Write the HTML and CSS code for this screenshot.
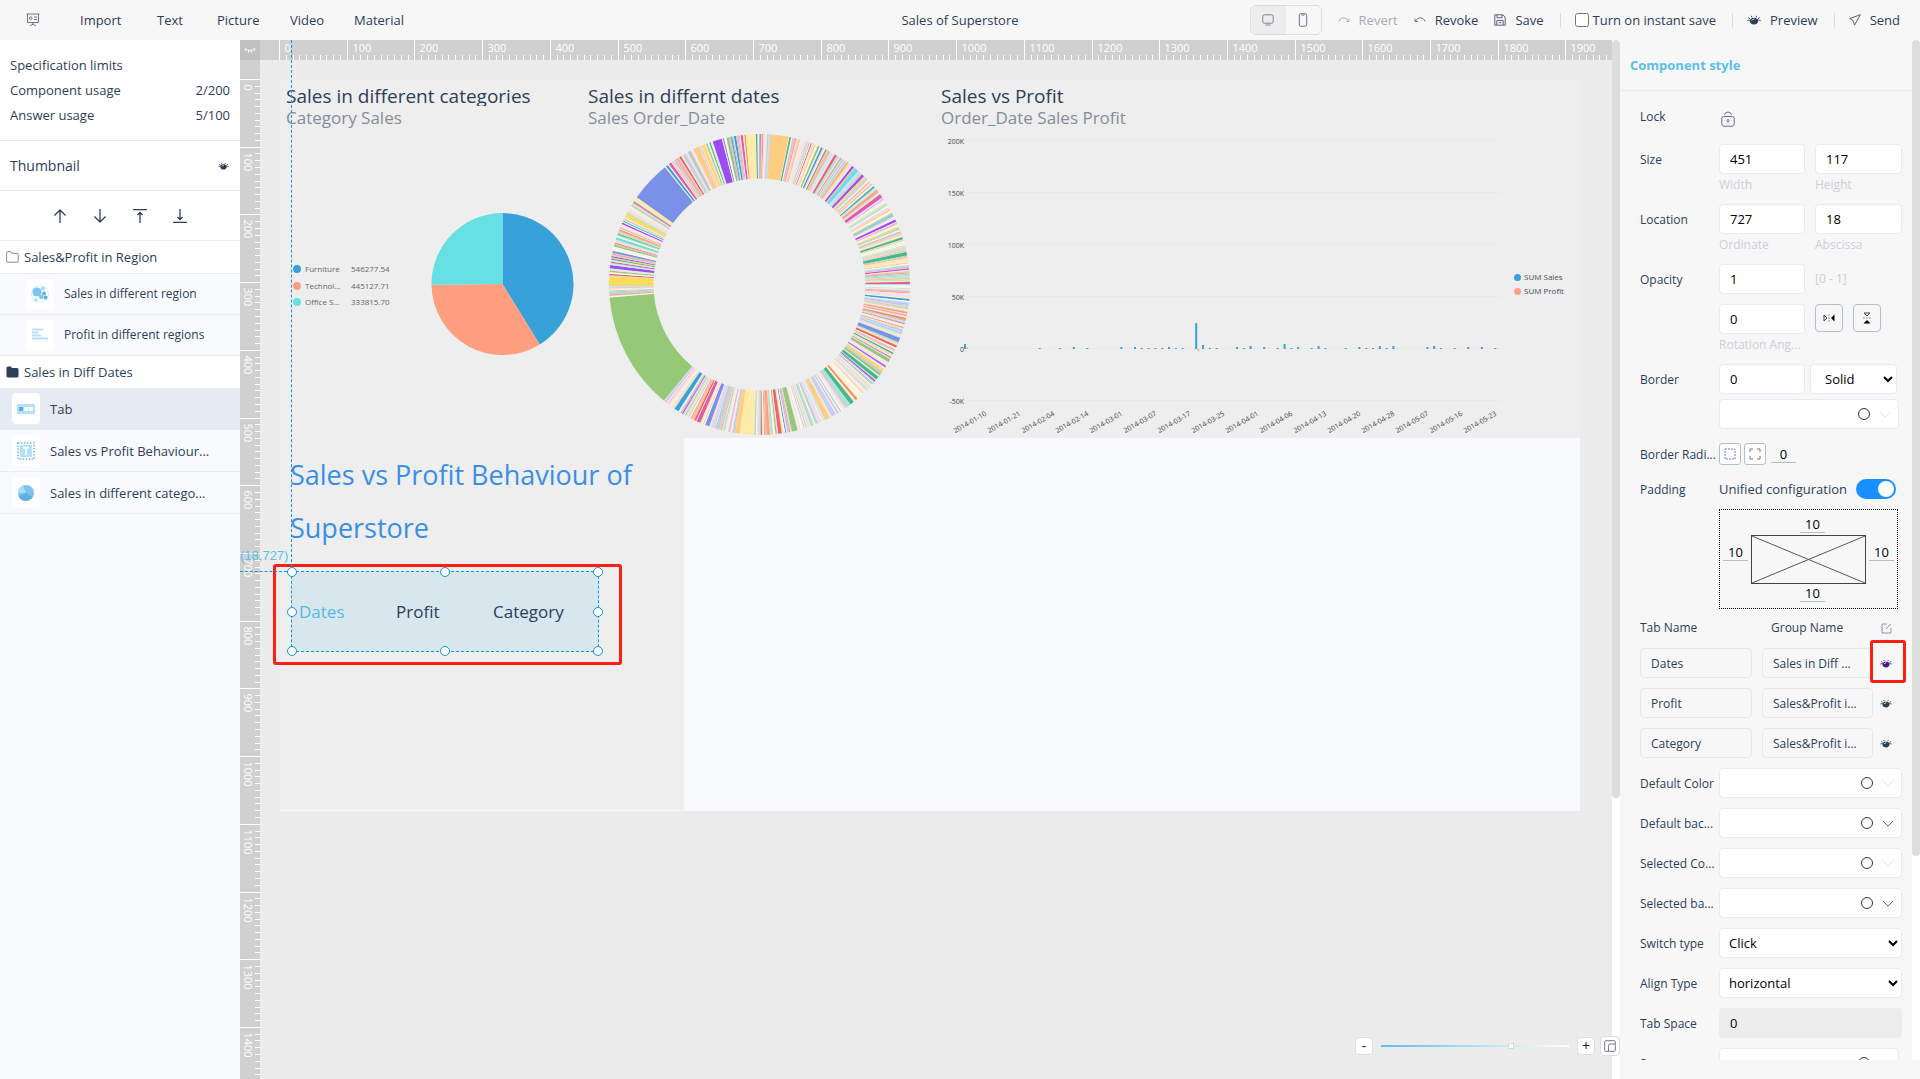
FILE: index.html
```html
<!DOCTYPE html>
<html lang="en">
<head>
<meta charset="utf-8">
<title>Sales of Superstore</title>
<link rel="stylesheet" href="styles.css">
</head>
<body>
<svg class="defs" aria-hidden="true">
  <symbol id="eye" viewBox="0 0 14 10">
    <path d="M2.600 5C3.600 3.500 5 2.900 7 2.900s3.400.6 4.400 2.100C11.200 8 9.500 9.600 7 9.600S2.800 8 2.600 5Z" fill="currentColor"/>
    <path d="M.3 5.600 2.600 5M13.700 5.600 11.400 5M1.200 2.500 3 3.800M12.800 2.500 11 3.800M4.300.8 5 2.500M9.700.8 9 2.500" stroke="currentColor" stroke-width=".9" fill="none"/>
    <path d="M4.800 5.400C5.400 4.500 6.200 4.200 7.400 4.200" stroke="#f7f7f7" stroke-width="1" fill="none"/>
  </symbol>
  <symbol id="chevron" viewBox="0 0 14 8"><path d="M1 1 7 7 13 1" fill="none" stroke="currentColor" stroke-width="1.100"/></symbol>
</svg>

<header class="topbar">
  <nav class="menu">
    <button class="plain menu-home" aria-label="Slides">
      <svg width="14" height="14" viewBox="0 0 14 14" fill="none" stroke="#6d7390"><path d="M.5 1H13.500M1.500 1V9.500H12.500V1M7 9.500V12M4 13 7 11 10 13"/><circle cx="4.700" cy="5.200" r="1.300"/><path d="M8 4H11M8 6.500H11"/></svg>
    </button>
    <button class="plain">Import</button>
    <button class="plain">Text</button>
    <button class="plain">Picture</button>
    <button class="plain">Video</button>
    <button class="plain">Material</button>
  </nav>
  <h1 class="doc-title">Sales of Superstore</h1>
  <div class="actions">
    <div class="device">
      <button class="plain on" aria-label="Desktop"><svg width="12" height="12" viewBox="0 0 12 12" fill="none" stroke="#8b7f98"><rect x=".8" y=".8" width="10.400" height="8.400" rx="1.500"/><path d="M3.500 11H8.500"/></svg></button>
      <button class="plain" aria-label="Phone"><svg width="10" height="14" viewBox="0 0 10 14" fill="none" stroke="#6b7399"><rect x="1.300" y=".7" width="7.400" height="12.600" rx="1.500"/><path d="M3.500 2H6.500"/></svg></button>
    </div>
    <button class="plain act faded"><svg width="12" height="10" viewBox="0 0 12 10" fill="none" stroke="currentColor"><path d="M1 6.500C2 2 8 1.500 10.500 6M11 3.500V6.500H8"/></svg>Revert</button>
    <button class="plain act"><svg width="12" height="10" viewBox="0 0 12 10" fill="none" stroke="#7a6f86"><path d="M11 6.500C10 2 4 1.500 1.500 6M1 3.500V6.500H4"/></svg>Revoke</button>
    <button class="plain act"><svg width="12" height="12" viewBox="0 0 12 12" fill="none" stroke="#59627c"><path d="M.8.8H8.800L11.200 3V11.200H.8ZM3 .8V3.800H8V.8M2.800 11V6.500H9.200V11M4.500 8.700H7.500"/></svg>Save</button>
    <label class="instant"><input type="checkbox">Turn on instant save</label>
    <button class="plain act sep"><svg width="14" height="10"><use href="#eye"/></svg>Preview</button>
    <button class="plain act sep"><svg width="12" height="12" viewBox="0 0 12 12" fill="none" stroke="#59627c"><path d="M11.300.7.800 4.600 4 6.600 5.500 11.200Z"/></svg>Send</button>
  </div>
</header>

<main class="workspace">
  <aside class="layers">
    <dl class="limits">
      <div><dt>Specification limits</dt></div>
      <div><dt>Component usage</dt><dd>2/200</dd></div>
      <div><dt>Answer usage</dt><dd>5/100</dd></div>
    </dl>
    <div class="thumb-head"><h2>Thumbnail</h2><button class="plain" aria-label="Toggle thumbnails"><svg width="11" height="8"><use href="#eye"/></svg></button></div>
    <div class="order">
      <button class="plain" aria-label="Move up"><svg width="14" height="14" viewBox="0 0 14 14"><path d="M7 14V1M1.500 6.500 7 1 12.500 6.500"/></svg></button>
      <button class="plain" aria-label="Move down"><svg width="14" height="14" viewBox="0 0 14 14"><path d="M7 0V13M1.500 7.500 7 13 12.500 7.500"/></svg></button>
      <button class="plain" aria-label="Move to top"><svg width="14" height="14" viewBox="0 0 14 14"><path d="M0 .7H14M7 14V3.500M4.500 6 7 3.500 9.500 6"/></svg></button>
      <button class="plain" aria-label="Move to bottom"><svg width="14" height="14" viewBox="0 0 14 14"><path d="M0 13.300H14M7 0V10.500M4.500 8 7 10.500 9.500 8"/></svg></button>
    </div>
    <ul class="tree">
      <li class="group"><svg width="13" height="12" viewBox="0 0 13 12" fill="none" stroke="#8b8794"><path d="M.6 2.400V10Q.6 11.200 1.800 11.200H11Q12.200 11.200 12.200 10V3.500Q12.200 2.300 11 2.300H6L5 .7H1.800Q.6.7.6 2Z"/></svg>Sales&amp;Profit in Region</li>
      <li class="item nested"><span class="chip"><svg width="18" height="18" viewBox="0 0 18 18"><circle cx="9" cy="9" r="8.500" fill="none" stroke="#d8eefb"/><circle cx="6" cy="7" r="4.600" fill="#7fc4ee"/><circle cx="12" cy="3.500" r="2" fill="#9fdcfa"/><circle cx="13" cy="8.500" r="2" fill="#5fb0e2"/><circle cx="10.200" cy="12" r="2.200" fill="#7fc4ee"/><circle cx="14.500" cy="12.500" r="2" fill="#5fb0e2"/><circle cx="5" cy="15" r="2" fill="#b8e6fc"/></svg></span>Sales in different region</li>
      <li class="item nested"><span class="chip"><svg width="18" height="14" viewBox="0 0 18 14"><path d="M1 1.500H12M1 4.500H7M1 7.500H10M1 10.500H17" stroke="#b5e2fa" stroke-width="1.800"/><path d="M1 13H17" stroke="#dff2fc" stroke-dasharray="1 2"/></svg></span>Profit in different regions</li>
      <li class="group"><svg width="13" height="12" viewBox="0 0 13 12" fill="#2d3e58"><path d="M.5 2Q.5.5 2 .5H5L6 2H11Q12.500 2 12.500 3.500V10Q12.500 11.500 11 11.500H2Q.5 11.500.5 10Z"/></svg>Sales in Diff Dates</li>
      <li class="item on"><span class="chip"><svg width="18" height="10" viewBox="0 0 18 10"><rect width="18" height="10" rx="1" fill="#b3e1fb"/><rect x="2" y="3" width="4" height="4" fill="#5aabe0"/><rect x="7" y="3" width="4" height="4" fill="#fff"/><rect x="12" y="3" width="4" height="4" fill="#fff"/></svg></span>Tab</li>
      <li class="item"><span class="chip"><svg width="18" height="18" viewBox="0 0 18 18"><rect x="1" y="1" width="16" height="16" fill="none" stroke="#6fb9e6" stroke-width="1.500" stroke-dasharray="1.500 1.500"/><rect x="3" y="3" width="12" height="12" rx="1" fill="#b3e1fb"/><path d="M6 5.700H12M9 5.700V13" stroke="#fff" stroke-width="1.800"/></svg></span>Sales vs Profit Behaviour...</li>
      <li class="item"><span class="chip"><svg width="18" height="18" viewBox="0 0 18 18"><circle cx="9" cy="9" r="8" fill="#7cc3ee"/><path d="M9 9 1 9A8 8 0 0 1 6 1.500Z" fill="#a9defa"/><path d="M9 9 1.500 12.500Q4 17 9 17L16 13.500Z" fill="#5fb0e2"/></svg></span>Sales in different catego...</li>
    </ul>
  </aside>

  <section class="stage">
    <button class="plain corner" aria-label="Hide guides"><svg width="12" height="6" viewBox="0 0 12 6" fill="none" stroke="#fff"><path d="M.5 1Q6 6 11.500 1M2 2.500 1 4M4.500 3.500V5.500M7.500 3.500V5.500M10 2.500 11 4"/></svg></button>
    <svg class="ruler ruler-x" id="ruler-x"></svg>
    <svg class="ruler ruler-y" id="ruler-y"></svg>
    <div class="viewport">
      <div class="canvas">
        <article class="widget w-pie">
          <h3>Sales in different categories</h3>
          <p>Category Sales</p>
          <svg class="plot" viewBox="0 0 301 304">
            <g id="pie"></g>
            <g class="legend">
              <circle cx="17" cy="135" r="4" fill="#37a2da"/><text x="25" y="138">Furniture</text><text x="71" y="138">546277.54</text>
              <circle cx="17" cy="152" r="4" fill="#ff9f7f"/><text x="25" y="155">Technol...</text><text x="71" y="155">445127.71</text>
              <circle cx="17" cy="168" r="4" fill="#67e0e3"/><text x="25" y="171">Office S...</text><text x="71" y="171">333815.70</text>
            </g>
          </svg>
        </article>
        <article class="widget w-donut">
          <h3>Sales in differnt dates</h3>
          <p>Sales Order_Date</p>
          <svg class="plot" viewBox="0 0 350 304"><g id="donut"></g></svg>
        </article>
        <article class="widget w-bars">
          <h3>Sales vs Profit</h3>
          <p>Order_Date Sales Profit</p>
          <svg class="plot" viewBox="0 0 649 304"><g id="bars"></g></svg>
        </article>
        <div class="widget w-text">Sales vs Profit Behaviour of Superstore</div>
        <div class="mark mark-tab"></div>
        <div class="guide-x"></div>
        <div class="guide-y"></div>
        <span class="coords">(18,727)</span>
        <div class="w-tab">
          <button class="plain on">Dates</button><button class="plain">Profit</button><button class="plain">Category</button>
          <i class="h tl"></i><i class="h tc"></i><i class="h tr"></i><i class="h ml"></i><i class="h mr"></i><i class="h bl"></i><i class="h bc"></i><i class="h br"></i>
        </div>
      </div>
    </div>
    <div class="zoom">
      <button aria-label="Zoom out">-</button>
      <input type="range" min="0" max="100" value="70" aria-label="Zoom">
      <button aria-label="Zoom in">+</button>
      <button class="fit" aria-label="Fit"><svg width="12" height="12" viewBox="0 0 12 12" fill="none" stroke="#7d7788"><rect x=".7" y=".7" width="10.600" height="10.600" rx="1"/><path d="M4.500 11V5.500Q4.500 4 6 4H11"/></svg></button>
    </div>
  </section>
  <div class="scroll"><div class="bar stage-bar"></div></div>

  <aside class="props">
    <h2>Component style</h2>
    <div class="props-body">
      <form class="form">
        <span class="lbl raised">Lock</span>
        <div class="ctl row30"><button type="button" class="plain" aria-label="Lock"><svg width="14" height="16" viewBox="0 0 14 16" fill="none" stroke="#6b6f88"><rect x=".8" y="5.500" width="12.400" height="9.700" rx="2"/><path d="M3.500 4Q4 1 7 1T10.500 4"/><circle cx="7" cy="9.500" r="1"/><path d="M7 10.500V12"/></svg></button></div>

        <span class="lbl">Size</span>
        <div class="ctl pair">
          <input id="w" value="451"><input id="h" value="117">
          <label for="w">Width</label><label for="h">Height</label>
        </div>

        <span class="lbl">Location</span>
        <div class="ctl pair">
          <input id="o" value="727"><input id="a" value="18">
          <label for="o">Ordinate</label><label for="a">Abscissa</label>
        </div>

        <label class="lbl" for="op">Opacity</label>
        <div class="ctl pair"><input id="op" value="1"><span class="hint">[0 - 1]</span></div>

        <span class="lbl"></span>
        <div class="ctl pair">
          <input id="rot" value="0">
          <div class="flips">
            <button type="button" aria-label="Flip horizontally"><svg width="12" height="8" viewBox="0 0 12 8"><path d="M1 1 4 4 1 7Z" fill="none" stroke="#444"/><path d="M6 0V8" stroke="#999" stroke-dasharray="2 1"/><path d="M11.500.500V7.500L8 4Z"/></svg></button>
            <button type="button" aria-label="Flip vertically"><svg width="8" height="12" viewBox="0 0 8 12"><path d="M1 1 4 4 7 1Z" fill="none" stroke="#444"/><path d="M0 6H8" stroke="#999" stroke-dasharray="2 1"/><path d="M.500 11.500H7.500L4 8Z"/></svg></button>
          </div>
          <label for="rot">Rotation Ang...</label>
        </div>

        <label class="lbl" for="bd">Border</label>
        <div class="ctl border-ctl">
          <input id="bd" value="0"><select aria-label="Border style"><option>Solid</option></select>
          <button type="button" class="color dim" aria-label="Border color"><i></i><svg width="12" height="7"><use href="#chevron"/></svg></button>
        </div>

        <label class="lbl" for="rad">Border Radi...</label>
        <div class="ctl radius">
          <button type="button" aria-label="All corners"><svg width="12" height="12" viewBox="0 0 12 12"><rect x="1" y="1" width="10" height="10" fill="none" stroke="#6b7be0" stroke-dasharray="2 1"/></svg></button>
          <button type="button" aria-label="Each corner"><svg width="12" height="12" viewBox="0 0 12 12"><path d="M1 4V1H4M8 1H11V4M11 8V11H8M4 11H1V8" fill="none" stroke="#777"/></svg></button>
          <input id="rad" class="line" value="0">
        </div>

        <span class="lbl short">Padding</span>
        <div class="ctl padding">
          <label class="unified">Unified configuration<input type="checkbox" role="switch" checked></label>
          <div class="box">
            <input class="line t" value="10" aria-label="Padding top">
            <input class="line l" value="10" aria-label="Padding left">
            <svg class="cross" viewBox="0 0 114 48" preserveAspectRatio="none"><path d="M0 0 114 48M0 48 114 0" stroke="#555" fill="none"/></svg>
            <input class="line r" value="10" aria-label="Padding right">
            <input class="line b" value="10" aria-label="Padding bottom">
          </div>
        </div>
      </form>

      <div class="tabs">
        <span>Tab Name</span><span class="gn">Group Name</span><button class="plain" aria-label="Edit groups"><svg width="11" height="11" viewBox="0 0 11 11" fill="none" stroke="#9a94a6"><path d="M6 1H1V10H10V5M5 6 10 1"/></svg></button>
        <input value="Dates" aria-label="Tab 1 name"><input value="Sales in Diff ..." aria-label="Tab 1 group"><button class="plain marked" aria-label="Show tab 1"><svg width="12" height="9"><use href="#eye"/></svg></button>
        <input value="Profit" aria-label="Tab 2 name"><input value="Sales&amp;Profit i..." aria-label="Tab 2 group"><button class="plain" aria-label="Show tab 2"><svg width="12" height="9"><use href="#eye"/></svg></button>
        <input value="Category" aria-label="Tab 3 name"><input value="Sales&amp;Profit i..." aria-label="Tab 3 group"><button class="plain" aria-label="Show tab 3"><svg width="12" height="9"><use href="#eye"/></svg></button>
      </div>

      <form class="form tail">
        <span class="lbl">Default Color</span>
        <button type="button" class="color dim" aria-label="Default color"><i></i><svg width="12" height="7"><use href="#chevron"/></svg></button>
        <span class="lbl">Default bac...</span>
        <button type="button" class="color" aria-label="Default background"><i></i><svg width="12" height="7"><use href="#chevron"/></svg></button>
        <span class="lbl">Selected Co...</span>
        <button type="button" class="color dim" aria-label="Selected color"><i></i><svg width="12" height="7"><use href="#chevron"/></svg></button>
        <span class="lbl">Selected ba...</span>
        <button type="button" class="color" aria-label="Selected background"><i></i><svg width="12" height="7"><use href="#chevron"/></svg></button>
        <label class="lbl" for="sw">Switch type</label>
        <select id="sw"><option>Click</option></select>
        <label class="lbl" for="al">Align Type</label>
        <select id="al"><option>horizontal</option></select>
        <label class="lbl" for="ts">Tab Space</label>
        <input id="ts" class="off" value="0" readonly>
        <span class="lbl">Space</span>
        <button type="button" class="color dim narrow" aria-label="Space color"><i></i><svg width="12" height="7"><use href="#chevron"/></svg></button>
      </form>
    </div>
  </aside>
  <div class="scroll props-scroll"><div class="bar props-bar"></div></div>
</main>
<script src="app.js"></script>
</body>
</html>
```
FILE: styles.css
```css
*, *::before, *::after { box-sizing: border-box; }
body {
  margin: 0;
  height: 100vh;
  display: flex;
  flex-direction: column;
  font: 14px/20px "Open Sans", "Noto Sans", sans-serif;
  color: #2d3e58;
  background: #f7f7f7;
  overflow: hidden;
}
button, input, select { font: inherit; color: inherit; margin: 0; }
h1, h2, h3, p, dl, dd, ul { margin: 0; padding: 0; font: inherit; }
svg { display: block; flex: none; }
.defs { position: absolute; width: 0; height: 0; }
.plain { border: 0; background: none; padding: 0; display: flex; align-items: center; }

/* top bar */
.topbar { flex: none; height: 40px; display: grid; grid-template-columns: 1fr auto 1fr; align-items: center; font-size: 13px; }
.menu { display: grid; grid-template-columns: 54px 77px 60px 73px 64px auto; justify-content: start; padding-left: 26px; }
.actions { display: flex; align-items: center; justify-content: flex-end; gap: 16px; padding-right: 20px; white-space: nowrap; }
.device { display: flex; width: 72px; height: 30px; border: 1px solid #dedede; border-radius: 6px; overflow: hidden; }
.device button { flex: 1; justify-content: center; }
.device .on { background: #ededed; }
.act { gap: 9px; }
.faded { color: #a5abb5; }
.instant { display: flex; align-items: center; gap: 4px; }
.instant input { width: 14px; height: 14px; }
.instant, .sep { position: relative; padding-left: 15px; }
.instant::before, .sep::before { content: ""; position: absolute; left: 0; top: 3px; height: 15px; border-left: 1px solid #ddd; }

.workspace { flex: 1; min-height: 0; display: flex; }

/* layer list */
.layers { flex: none; width: 240px; background: #f9fafd; }
.limits { background: #fff; padding: 13px 10px 12px; height: 101px; border-bottom: 1px solid #ebebeb; font-size: 13px; line-height: 25px; }
.limits div { display: flex; justify-content: space-between; }
.thumb-head { display: flex; justify-content: space-between; align-items: center; height: 50px; padding: 0 11px 0 10px; background: #fff; border-bottom: 1px solid #ebebeb; }
.order { display: flex; justify-content: center; gap: 26px; height: 50px; background: #fff; border-bottom: 1px solid #ebebeb; }
.order path { fill: none; stroke: #2d3e58; stroke-width: 1.3; }
.tree { list-style: none; font-size: 13px; }
.group { display: flex; align-items: center; gap: 5px; height: 32px; padding-left: 6px; background: #fff; }
.item { display: flex; align-items: center; gap: 10px; height: 42px; padding-left: 12px; border-bottom: 1px solid #ebedf0; }
.item.on { background: #e6eaf2; }
.nested { height: 41px; padding-left: 26px; font-size: 12px; border-top: 1px solid #ebedf0; border-bottom: 0; }
.nested + .group { border-top: 1px solid #ebedf0; height: 33px; }
.chip { display: flex; align-items: center; justify-content: center; width: 28px; height: 31px; border-radius: 4px; background: #fff; }

/* stage */
.stage { flex: 1; min-width: 0; position: relative; display: grid; grid-template: 20px 1fr / 20px 1fr; background: #ececec; }
.corner { background: #c0c0c0; justify-content: center; }
.ruler { width: 100%; height: 100%; background: #d0d0d0; overflow: hidden; }
.ruler line { stroke: #fff; stroke-width: 1; }
.ruler text { fill: #fff; font-size: 11px; }
.viewport { min-width: 0; min-height: 0; padding: 20px; }
.canvas { position: relative; width: 1300px; height: 731px; background: #f9fafd; }
.widget { position: absolute; background: #eee; }
.w-pie { left: 0; top: 0; width: 301px; height: 358px; padding: 4px 6px; }
.w-donut { left: 301px; top: 0; width: 350px; height: 358px; padding: 4px 7px; }
.w-bars { left: 651px; top: 0; width: 649px; height: 358px; padding: 4px 10px; }
.widget h3 { font-size: 19px; line-height: 24px; height: 22px; overflow: hidden; white-space: nowrap; }
.widget p { font-size: 17px; line-height: 24px; color: #858d9a; }
.plot { position: absolute; left: 0; top: 54px; width: 100%; height: 304px; }
.legend text { font-size: 8px; fill: #666; }
.axis .key { font-size: 8px; fill: #4a4f5c; }
.axis .tick { font-size: 7px; fill: #444; }
.w-text { left: 0; top: 358px; width: 404px; height: 372px; padding: 10px; font-size: 27px; line-height: 53px; color: #3a8ee6; }
.mark { position: absolute; border: 3px solid #ff1e12; border-radius: 3px; }
.mark-tab { left: -7px; top: 484px; width: 349px; height: 101px; }
.guide-x { position: absolute; left: 11px; top: -40px; height: 532px; border-left: 1px dashed #1296db; }
.guide-y { position: absolute; left: -40px; top: 491px; width: 52px; border-top: 1px dashed #1296db; }
.coords { position: absolute; left: -40px; top: 466px; font-family: "Liberation Sans", Arial, sans-serif; font-size: 13px; color: #5bbfe8; }
.w-tab { position: absolute; left: 11px; top: 491px; width: 308px; height: 81px; display: grid; grid-template-columns: repeat(3, 97px); padding-left: 7px; border: 1px dashed #1296db; background: #d8e6ed; font-size: 17px; }
.w-tab .on { color: #55b9e8; }
.h { position: absolute; width: 10px; height: 10px; margin: -5px; border: 1px solid #1296db; border-radius: 50%; background: #fff; }
.tl, .tc, .tr { top: 0; }
.ml, .mr { top: 50%; }
.bl, .bc, .br { top: 100%; }
.tl, .ml, .bl { left: 0; }
.tc, .bc { left: 50%; }
.tr, .mr, .br { left: 100%; }

.zoom { position: absolute; right: -8px; bottom: 23px; display: flex; align-items: center; z-index: 1; }
.zoom button { width: 18px; height: 18px; padding: 0; border: 1px solid #ddd; border-radius: 4px; background: #fff; color: #222; line-height: 14px; display: flex; align-items: center; justify-content: center; }
.zoom .fit { width: 20px; height: 20px; margin-left: 5px; }
.zoom input { appearance: none; width: 188px; height: 2px; margin: 0 8px; background: linear-gradient(90deg, #5bbfe8, #fff); }
.zoom input::-webkit-slider-thumb { appearance: none; width: 6px; height: 6px; border: 1px solid #d5d5d5; border-radius: 1px; background: #fff; }

.scroll { flex: none; width: 8px; background: #fff; }
.bar { background: #ddd; border-radius: 4px; }
.stage-bar { height: 73%; }
.props-scroll { margin-bottom: 19px; }
.props-bar { height: 80%; }

/* properties */
.props { flex: none; width: 292px; display: flex; flex-direction: column; padding-bottom: 19px; font-size: 13px; }
.props h2 { height: 51px; line-height: 50px; padding-left: 10px; font-weight: 700; color: #5bbfe8; border-bottom: 1px solid #ebebeb; }
.props-body { flex: 1; min-height: 0; overflow: hidden; padding: 13px 10px 0 20px; }
.props input:not([type]), .props select, .color { width: 100%; min-width: 0; height: 30px; padding: 0 10px; border: 1px solid #e8ebef; border-radius: 4px; background: #fff; color: #000; }
.props select { padding: 0 0 0 5px; }
.form { display: grid; grid-template-columns: 79px 183px; row-gap: 10px; }
.lbl { height: 30px; line-height: 32px; white-space: nowrap; font-size: 12px; }
.raised { line-height: 26px; }
.short { line-height: 22px; }
.row30 { display: flex; align-items: center; height: 30px; padding-left: 2px; }
.pair { display: grid; grid-template-columns: 86px 87px; column-gap: 10px; }
.pair label { height: 20px; line-height: 22px; }
.pair label, .hint { color: #ccd0d8; white-space: nowrap; font-size: 12px; }
.hint { line-height: 30px; }
.flips { display: flex; gap: 10px; }
.flips button { width: 28px; height: 28px; padding: 0; border: 1px solid #afbfd0; border-radius: 4px; background: none; display: flex; align-items: center; justify-content: center; }
.border-ctl { display: grid; grid-template-columns: 86px 87px; gap: 5px; }
.border-ctl .color { grid-column: span 2; width: 180px; }
.props .border-ctl select { padding-left: 10px; }
.color { display: flex; align-items: center; justify-content: flex-end; gap: 9px; }
.props .color { padding: 0 7px; }
.color i { width: 12px; height: 12px; border: 1px solid #333; border-radius: 50%; }
.color svg { color: #555b6e; }
.color.dim svg { color: #ddd; }
.props .narrow { width: 180px; }
.radius { display: flex; align-items: center; gap: 3px; }
.radius button { width: 22px; height: 22px; padding: 0; border: 1px solid #afbfd0; border-radius: 3px; background: #fff; display: flex; align-items: center; justify-content: center; }
.props input.line:not([type]) { width: 25px; height: 18px; padding: 0; border: 0; border-bottom: 1px solid #afbfd0; border-radius: 0; background: none; text-align: center; }
.radius input { margin-left: 2px; }
.padding { display: grid; gap: 10px; }
.unified { display: flex; justify-content: space-between; align-items: center; height: 20px; padding-right: 6px; }
.unified input { appearance: none; width: 40px; height: 20px; border-radius: 10px; background: #1890ff; display: flex; justify-content: flex-end; padding: 2px; }
.unified input::after { content: ""; width: 16px; height: 16px; border-radius: 50%; background: #fff; }
.box { width: 179px; height: 100px; border: 1px dotted #000; display: grid; grid-template: 25px 49px 24px / 31px 115px 31px; justify-items: center; align-items: start; }
.box .t, .box .b { grid-column: 1 / 4; margin-left: 8px; }
.box .t { align-self: end; margin-bottom: 2px; }
.box .l, .box .r { margin-top: 8px; }
.cross { width: 115px; height: 49px; border: 1px solid #444; }
.tabs { display: grid; grid-template-columns: 112px 111px 14px; column-gap: 10px; row-gap: 10px; align-items: center; margin: 9px 0 10px; font-size: 12px; }
.tabs .gn { padding-left: 9px; }
.tabs .plain { justify-content: center; margin-left: -8px; position: relative; }
.props .tabs input { background: none; border-color: #e6e8ec; color: #2d3e58; }
.marked { color: #4b1a8a; }
.marked::after { content: ""; position: absolute; left: -5px; top: -19px; width: 36px; height: 43px; border: 3px solid #ff1e12; border-radius: 3px; }
.props input.off:not([type]) { background: #ededed; border-color: #ededed; }
```
FILE: app.js
```js
const NS = 'http://www.w3.org/2000/svg';
function add(parent, tag, attrs, text) {
  const el = document.createElementNS(NS, tag);
  for (const k in attrs) el.setAttribute(k, attrs[k]);
  if (text !== undefined) el.textContent = text;
  parent.appendChild(el);
  return el;
}

/* rulers: a canvas of 1920 units is drawn 1300px wide */
const scale = 1300 / 1920;
const rx = document.getElementById('ruler-x');
const ry = document.getElementById('ruler-y');
function ruler(svg, length, vertical) {
  for (let u = 0; 20 + u * scale < length; u += 10) {
    const p = 20 + Math.round(u * scale) - 0.5;
    const major = u % 100 === 0;
    const from = major ? 0 : 15;
    add(svg, 'line', vertical ? { y1: p, y2: p, x1: from, x2: 20 } : { x1: p, x2: p, y1: from, y2: 20 });
    if (major) {
      add(svg, 'text', vertical ? { transform: `translate(4 ${p + 5}) rotate(90)` } : { x: p + 5, y: 12 }, u);
    }
  }
}
ruler(rx, rx.clientWidth || 1352, false);
ruler(ry, ry.clientHeight || 1019, true);

/* ring slices, angles in degrees clockwise from the top */
function slice(g, cx, cy, r0, r1, a, b, fill) {
  const pt = (r, d) => {
    const t = d * Math.PI / 180;
    return (cx + r * Math.sin(t)).toFixed(2) + ' ' + (cy - r * Math.cos(t)).toFixed(2);
  };
  const big = b - a > 180 ? 1 : 0;
  const inner = r0 ? `L${pt(r0, b)}A${r0} ${r0} 0 ${big} 0 ${pt(r0, a)}` : `L${cx} ${cy}`;
  add(g, 'path', { d: `M${pt(r1, a)}A${r1} ${r1} 0 ${big} 1 ${pt(r1, b)}${inner}Z`, fill });
}

const pie = document.getElementById('pie');
slice(pie, 222.5, 150, 0, 71, 0, 148.4, '#37a2da');
slice(pie, 222.5, 150, 0, 71, 148.4, 269.3, '#ff9f7f');
slice(pie, 222.5, 150, 0, 71, 269.3, 360, '#67e0e3');

const C = {
  b: '#37a2da', g: '#96c977', d: '#47b784', p: '#9d4bf5', k: '#e15bad', y: '#ffdb5c', l: '#ffeaa8',
  o: '#fdcd83', s: '#ff9f7f', r: '#eb6467', c: '#67e0e3', v: '#7991e8', a: '#ff8f3a'
};
const faint = ['#fff3d9', '#ffeaa8', '#f5d3dc', '#fff8ee', '#c9dff5', '#ffe3d6', '#f3e6ff', '#d4ede0', '#fff3d9',
  '#ffb89c', '#fbd9e8', '#b5c3f3', '#a9dcc5', '#f7a8a2', '#fff6e0', '#d5b9f7', '#9be8ea', '#fdcd83', '#cfe5b8'];
const slices = [
  [0, .5, 'p'], [.9, 1.5, 's'], [4.4, 11.2, 'o'], [11.5, 12.2, 'd'], [15, 15.8, 'o'], [20, 20.400, 'k'], [22.8, 23.6, 'g'], [24.2, 24.9, 'b'], [26, 26.5, 'r'],
  [30, 31, 'r'], [32.5, 33.1, 's'], [33.6, 34, 'c'], [35.6, 36, 'a'], [38, 38.9, 'p'], [39.5, 41, 'c'], [43, 44, 'p'], [49.3, 49.9, 'b'],
  [51, 51.9, 's'], [53.2, 54.7, 'k'], [62, 62.9, 'c'], [64.4, 65.400, 'p'], [71.7, 72.5, 'd'], [77.5, 78.9, 'd'], [83.8, 84.4, 'k'],
  [89, 89.8, 'k'], [95.5, 96.3, 'b'], [98.8, 99.1, 'c'], [100.5, 101.2, 's'], [102.9, 103.6, 'a'], [105, 105.3, 'd'], [110.8, 112.6, 'v'], [114, 114.9, 'r'],
  [117, 117.6, 'd'], [118.9, 119.3, 'k'], [119.8, 121.1, 'g'], [122.8, 123.400, 'p'], [124.2, 125.3, 'y'], [126.2, 127.2, 'g'], [127.8, 129.2, 'd'],
  [129.6, 130.1, 'p'], [131, 131.4, 'c'], [139.4, 140.3, 'a'], [141.2, 142.8, 'd'], [152.2, 154.2, 'o'], [165.400, 167.6, 'g'], [169.8, 170.2, 'b'], [171.5, 172.9, 'r'],
  [173.4, 173.9, 'g'], [176, 177.2, 's'], [179, 179.4, 'r'], [182.3, 187.6, 'l'], [187.6, 189.2, 'o'], [199.5, 201.2, 'v'], [203.2, 204.7, 'k'], [205, 205.7, 'r'],
  [210.6, 211, 'p'], [212.6, 214.4, 'b'], [219.6, 265, 'g'], [269.6, 273.2, 'y'], [273.5, 274.1, 'r'], [274.8, 275.3, 'g'],
  [276.2, 277.4, 'p'], [278.3, 278.8, 'k'], [279.5, 279.9, 'd'], [280.4, 280.9, 'p'], [282.2, 283, 'v'], [284.6, 285.2, 'g'], [285.7, 286.2, 'a'],
  [287.3, 288.3, 'c'], [289.5, 289.9, 'd'], [290.8, 291.6, 's'], [293.7, 294.3, 'p'], [294.8, 295.2, 'b'], [296.6, 298, 'y'], [303, 303.5, 'k'],
  [303.8, 305.400, 'l'], [305.400, 321.1, 'v'], [321.6, 322.5, 'b'], [323, 324.1, 'k'], [327.8, 328.6, 'r'], [332, 332.4, 'g'], [334, 335.9, 'o'],
  [337.5, 338.6, 'y'], [339.3, 339.8, 'g'], [340.5, 341, 'd'], [341.9, 345.5, 'p'], [345.9, 346.4, 'v'], [347.3, 348.2, 'g'], [349, 349.5, 'd'], [350.2, 351, 'b'],
  [352.8, 353.7, 'k'], [354.2, 354.7, 'a'], [354.8, 358.400, 'l'], [358.6, 359.2, 'd']
];
const donut = document.getElementById('donut');
const ring = (a, b, fill) => slice(donut, 178.5, 150.5, 106, 150.5, a, b, fill);
let seed = 7;
function rnd() { seed = (seed * 16807) % 2147483647; return seed / 2147483647; }
let at = 0;
for (const [a, b, key] of slices.concat([[360, 360, 'l']])) {
  while (at < a - 0.05) {
    const end = Math.min(a, at + 0.3 + rnd() * 0.35);
    ring(at, end, faint[Math.floor(rnd() * faint.length)]);
    at = end;
  }
  if (b > a) ring(a, b, C[key]);
  at = b;
}

/* bar chart */
const bars = document.getElementById('bars');
bars.setAttribute('class', 'axis');
['200K', '150K', '100K', '50K', '0', '-50K'].forEach((t, i) => {
  const y = 6.5 + i * 52;
  add(bars, 'line', { x1: 35, x2: 570, y1: y, y2: y, stroke: '#e8e8e8' });
  add(bars, 'text', { x: 33, y: y + 3, 'text-anchor': 'end', class: 'tick' }, t);
});
const zero = 215;
const sales = [5, 0, 0, 0, 0, 0, 0, 0, 0, 0, 0, 1, 0, 0, 1, 0, 2, 0, 1, 0, 0, 0, 0, 2, 0, 2, 1, 1, 1, 1, 2, 1, 1, 0, 26, 4, 1, 1,
  0, 0, 2, 1, 3, 0, 2, 0, 1, 5, 1, 2, 0, 1, 3, 1, 0, 0, 1, 0, 2, 1, 1, 3, 1, 3, 0, 0, 0, 0, 2, 3, 1, 0, 1, 0, 2, 0, 2, 0, 1];
sales.forEach((v, i) => {
  const x = 33 + i * 6.8;
  if (v) add(bars, 'rect', { x, y: zero - v, width: 2, height: v, fill: '#37a2da' });
  if (i === 0) add(bars, 'rect', { x: x + 2, y: zero - 2, width: 2, height: 2, fill: '#ffb59c' });
  if (v > 20) add(bars, 'rect', { x: x + 2, y: zero, width: 2, height: 2, fill: '#ffb59c' });
});
['01-10', '01-21', '02-04', '02-14', '03-01', '03-07', '03-17', '03-25', '04-01', '04-06', '04-13', '04-20', '04-28',
  '05-07', '05-16', '05-23'].forEach((t, i) => {
  add(bars, 'text', { transform: `translate(${56 + i * 34} 281) rotate(-30)`, 'text-anchor': 'end', class: 'tick' }, '2014-' + t);
});
add(bars, 'circle', { cx: 586.5, cy: 143.5, r: 3.5, fill: '#37a2da' });
add(bars, 'text', { x: 593, y: 146, class: 'key' }, 'SUM Sales');
add(bars, 'circle', { cx: 586.5, cy: 157.5, r: 3.5, fill: '#ff9f7f' });
add(bars, 'text', { x: 593, y: 160, class: 'key' }, 'SUM Profit');
```
